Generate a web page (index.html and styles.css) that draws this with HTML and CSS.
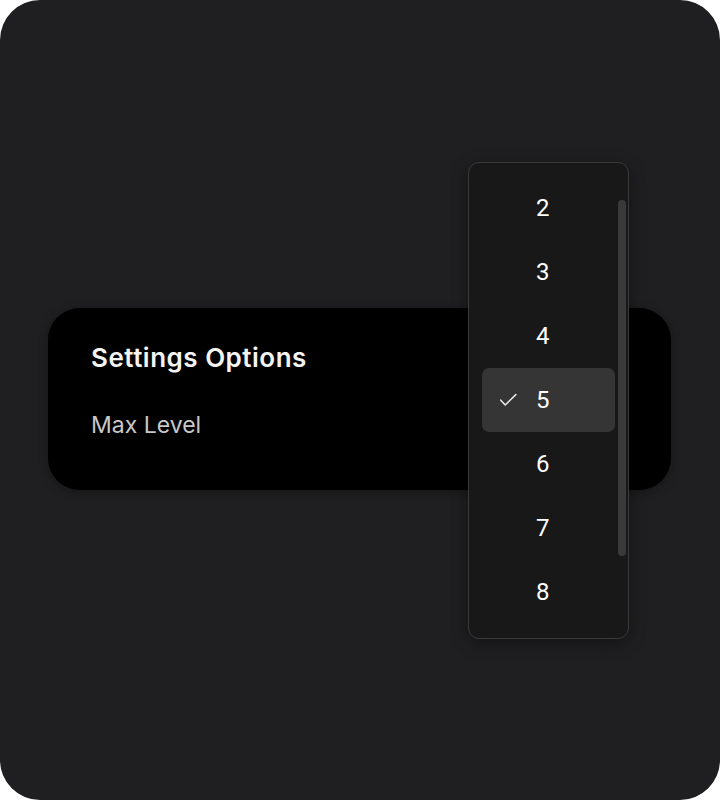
FILE: index.html
```html
<!DOCTYPE html>
<html>
<head>
<meta charset="utf-8">
<link rel="stylesheet" href="styles.css">
</head>
<body>
<div class="frame">
  <div class="card">
    <div class="title">Settings Options</div>
    <div class="label">Max Level</div>
  </div>
  <div class="menu">
    <div class="list">
      <div class="item"><span class="check"></span><span class="num">2</span></div>
      <div class="item"><span class="check"></span><span class="num">3</span></div>
      <div class="item"><span class="check"></span><span class="num">4</span></div>
      <div class="item selected"><span class="check"><svg width="18" height="18" viewBox="0 0 18 18"><path d="M1.8 9.2 L6.2 14 L16.8 3.6" fill="none" stroke="#e6e6e6" stroke-width="1.6" stroke-linecap="round" stroke-linejoin="round"/></svg></span><span class="num">5</span></div>
      <div class="item"><span class="check"></span><span class="num">6</span></div>
      <div class="item"><span class="check"></span><span class="num">7</span></div>
      <div class="item"><span class="check"></span><span class="num">8</span></div>
    </div>
    <div class="scrollbar"></div>
  </div>
</div>
</body>
</html>
```

FILE: styles.css
```css
html, body {
  margin: 0;
  padding: 0;
  background: #ffffff;
}
body {
  font-family: Roboto, "Liberation Sans", sans-serif;
}
.frame {
  position: relative;
  width: 720px;
  height: 800px;
  background: #1f1f21;
  border-radius: 40px;
  overflow: hidden;
  padding-top: 308px;
  box-sizing: border-box;
}
.card {
  margin-left: 48px;
  width: 623px;
  height: 182px;
  box-sizing: border-box;
  background: #000;
  border-radius: 32px;
  padding: 34px 43px 0;
  box-shadow: 0 2px 10px rgba(0,0,0,0.35);
}
.title {
  color: #f4f4f4;
  font-family: Inter, Roboto, sans-serif;
  font-weight: 600;
  font-size: 26px;
  line-height: 32px;
  letter-spacing: 0.5px;
}
.label {
  margin-top: 36px;
  color: #c8c8c8;
  font-family: Inter, Roboto, sans-serif;
  font-size: 23px;
  line-height: 30px;
}
.menu {
  position: absolute;
  left: 468px;
  top: 162px;
  width: 161px;
  height: 477px;
  box-sizing: border-box;
  background: #181818;
  border: 1.5px solid #3a3a3a;
  border-radius: 11px;
  display: flex;
  padding: 13px 2px 13px 13px;
  box-shadow: 0 4px 16px rgba(0,0,0,0.4);
}
.list {
  width: 133px;
  display: flex;
  flex-direction: column;
}
.item {
  height: 64px;
  display: flex;
  align-items: center;
  border-radius: 7px;
}
.item.selected {
  background: #353535;
}
.check {
  width: 18px;
  height: 18px;
  margin-left: 17px;
  display: flex;
}
.num {
  margin-left: 19px;
  color: #ffffff;
  font-size: 24px;
  font-weight: 400;
}
.scrollbar {
  margin-left: 3px;
  margin-top: 24px;
  width: 8px;
  height: 356px;
  background: #3a3a3a;
  border-radius: 4px;
}
```
